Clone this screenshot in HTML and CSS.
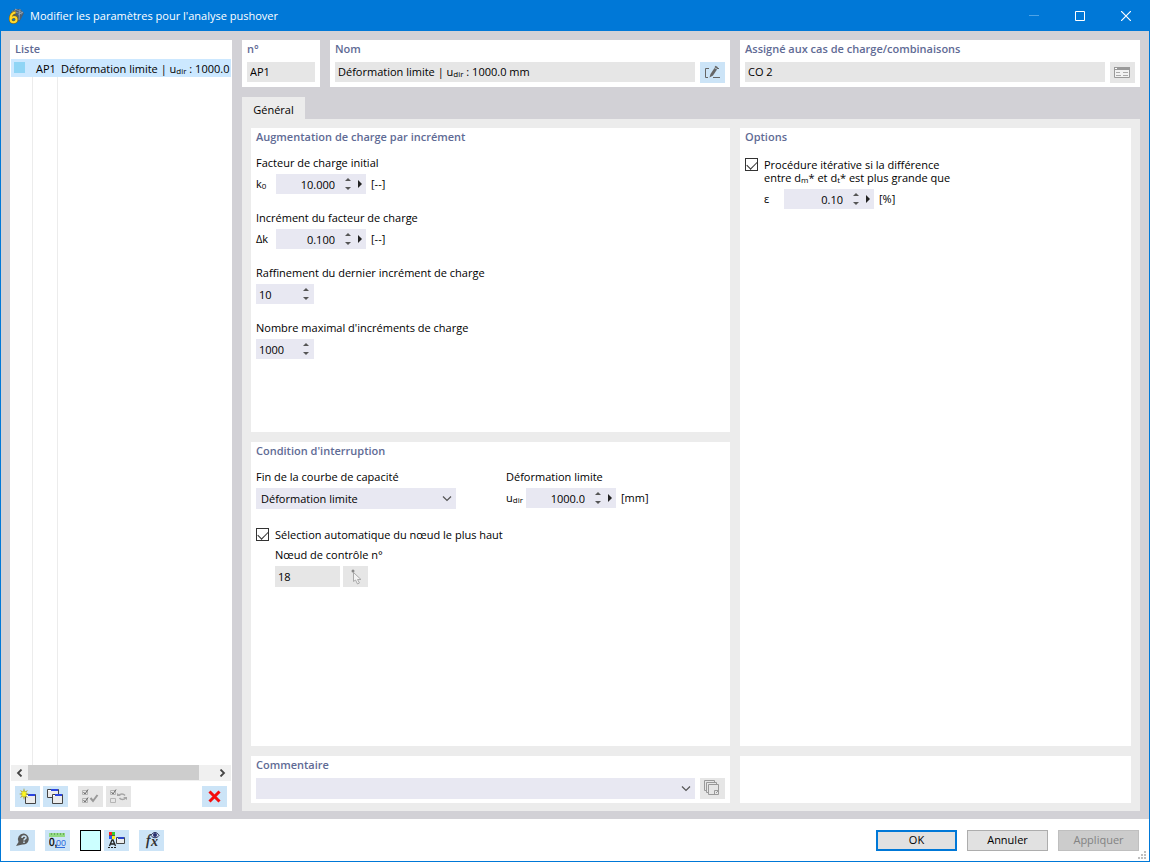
FILE: index.html
```html
<!DOCTYPE html>
<html lang="fr">
<head>
    <meta charset="UTF-8">
    <title>Modifier les paramètres pour l'analyse pushover</title>
    <link rel="stylesheet" href="styles.css">
</head>

<body>
    <div class="window">
        <!-- Barre de titre -->
        <header class="titlebar">
            <svg class="logo" width="16" height="16" viewBox="0 0 16 16">
                <path d="M3 4 7 1h5l4 4-3 6-2 3z" fill="#4a6076"/>
                <path d="M4 3l10 3M7 1l8 4M12 1l-1 11M8 1 5 5M15 4l-5 3" stroke="#9aabba" stroke-width=".7"/>
                <path d="M7.500 4.500C4 5 2.500 8 2.500 11c0 2 1 3.200 3 3.200s3-1.300 3-2.800-1-2.400-2.600-2.400S3.500 9.500 3 11" fill="none" stroke="#8a6500" stroke-width="3.200"/>
                <path d="M7.500 4.500C4 5 2.500 8 2.500 11c0 2 1 3.200 3 3.200s3-1.300 3-2.800-1-2.400-2.600-2.400S3.500 9.500 3 11" fill="none" stroke="#ffd92e" stroke-width="2"/>
            </svg>
            <h1 class="window-title">Modifier les paramètres pour l'analyse pushover</h1>
            <div class="window-buttons">
                <button type="button" aria-label="Réduire" disabled>
                    <svg width="10" height="10"><path d="M0 4.500h10" stroke="#4ea3e6"/></svg>
                </button>
                <button type="button" aria-label="Agrandir">
                    <svg width="10" height="10"><path d="M.5.5h9v9h-9z" fill="none" stroke="#fff"/></svg>
                </button>
                <button type="button" aria-label="Fermer">
                    <svg width="10" height="10"><path d="M0 0l10 10M10 0 0 10" stroke="#fff" stroke-width="1.200"/></svg>
                </button>
            </div>
        </header>

        <main class="content">
            <!-- Liste -->
            <aside class="panel list">
                <h2 class="panel-title">Liste</h2>
                <ul class="list-rows">
                    <li class="list-row">
                        <span class="swatch"></span>
                        <span class="list-no">AP1</span>
                        <span class="list-name">Déformation limite | u<sub>dir</sub> : 1000.0 mm</span>
                    </li>
                </ul>
                <div class="scrollbar">
                    <button type="button" aria-label="Défiler à gauche">
                        <svg width="7" height="8"><path d="M5.500.5 2 4l3.500 3.500" fill="none" stroke="#444" stroke-width="1.800"/></svg>
                    </button>
                    <div class="scroll-track"><div class="scroll-thumb"></div></div>
                    <button type="button" aria-label="Défiler à droite">
                        <svg width="7" height="8"><path d="M1.500.5 5 4 1.500 7.500" fill="none" stroke="#444" stroke-width="1.800"/></svg>
                    </button>
                </div>
                <div class="toolbar">
                    <button type="button" class="tool" aria-label="Nouveau">
                        <svg width="17" height="17">
                            <path d="M6.500 6.500h10v9h-10z" fill="#ececec" stroke="#444"/>
                            <path d="M7 7h9v1H7z" fill="#fff"/><path d="M9 6h7v2H9z" fill="#2b45e0"/>
                            <path d="M5 0l1 3.500L9 2 7 5l3 1-3 1 2 3-3-1.500L5 12l-1-3.500L1 10l2-3-3-1 3-1-2-3 3 1.500z" fill="#a5a03c"/>
                            <path d="M5 2l.7 2.300L8 3.500 6.500 5.500 8 6l-1.500.7L7.500 9 5.700 7.700 5 10l-.7-2.300L2.500 9l1-2.300L2 6l1.500-.5L2.500 3l1.800 1.300z" fill="#fff820"/>
                        </svg>
                    </button>
                    <button type="button" class="tool" aria-label="Copier">
                        <svg width="17" height="17">
                            <path d="M.5 1.500h11v8H.5z" fill="#ececec" stroke="#444"/><path d="M1 2h3v1H1z" fill="#fff"/><path d="M4 1h7v2H4z" fill="#2b45e0"/>
                            <path d="M5.500 6.500h10v9h-10z" fill="#ececec" stroke="#444"/><path d="M6 7h3v1H6z" fill="#fff"/><path d="M8 6h7v2H8z" fill="#2b45e0"/>
                        </svg>
                    </button>
                    <button type="button" class="tool tool-gap" aria-label="Tout sélectionner" disabled>
                        <svg width="17" height="15" fill="none">
                            <path d="M.5 1.500h5v4h-5zM.5 9.500h5v4h-5z" stroke="#b5b5b5"/>
                            <path d="M1.500 3 3 5l3-4.500M1.500 11 3 13l3-4.500" stroke="#666"/>
                            <path d="M8.500 9l2.500 3 4.500-6" stroke="#999" stroke-width="2"/>
                        </svg>
                    </button>
                    <button type="button" class="tool" aria-label="Inverser la sélection" disabled>
                        <svg width="17" height="15" fill="none">
                            <path d="M.5 1.500h5v4h-5zM.5 9.500h5v4h-5z" stroke="#b5b5b5"/>
                            <path d="M1.500 3 3 5l3-4.500" stroke="#666"/>
                            <path d="M8.500 6.500c2-2 5-2 6.500 0M15.500 9c-1.500 2-4.500 2-6 0" stroke="#a5a5a5" stroke-width="1.500"/>
                            <path d="M7 4v3h4zM17 11V8h-4z" fill="#a5a5a5"/>
                        </svg>
                    </button>
                    <button type="button" class="tool tool-end" aria-label="Supprimer">
                        <svg width="13" height="13"><path d="M1.500 1.500l10 10M11.500 1.500l-10 10" stroke="#f50d0d" stroke-width="3"/></svg>
                    </button>
                </div>
            </aside>

            <div class="details">
                <!-- En-tête -->
                <div class="summary">
                    <section class="panel">
                        <h2 class="panel-title"><label for="no">n°</label></h2>
                        <div class="bar"><input class="field readonly grow" id="no" value="AP1" readonly></div>
                    </section>
                    <section class="panel">
                        <h2 class="panel-title">Nom</h2>
                        <div class="bar">
                            <output class="field readonly grow">Déformation limite | u<sub>dir</sub> : 1000.0 mm</output>
                            <button type="button" class="tool" aria-label="Modifier le nom">
                                <svg width="17" height="15" fill="none" stroke="#666">
                                    <path d="M5 3.500H1.500v9H4M9 12.500h7M13 3.500h2"/>
                                    <path d="M5.500 12.500 6.500 9l4-6 2.500 1.500-4 6z" fill="#666" stroke="none"/>
                                    <path d="M11 1.500 13.500 3" stroke-width="2"/>
                                </svg>
                            </button>
                        </div>
                    </section>
                    <section class="panel">
                        <h2 class="panel-title"><label for="assigned">Assigné aux cas de charge/combinaisons</label></h2>
                        <div class="bar">
                            <input class="field readonly grow" id="assigned" value="CO 2" readonly>
                            <button type="button" class="tool" aria-label="Afficher les cas de charge" disabled>
                                <svg width="17" height="11" fill="none" stroke="#aaa">
                                    <path d="M.5.5h15v10H.5z" fill="#f2f2f2" stroke="#999"/>
                                    <path d="M0 1.500h16" stroke="#999" stroke-width="3"/>
                                    <path d="M1 1.500h2" stroke="#fff"/>
                                    <path d="M2 5.500h4M9 5.500h5M2 8.500h5M9 8.500h5"/>
                                </svg>
                            </button>
                        </div>
                    </section>
                </div>

                <nav class="tabs"><button type="button" class="tab">Général</button></nav>

                <div class="tab-body">
                    <div class="upper">
                        <div class="column">
                            <section class="panel">
                                <h2 class="panel-title">Augmentation de charge par incrément</h2>
                                <div class="group">
                                    <label for="k0">Facteur de charge initial</label>
                                    <div class="line">
                                        <span class="symbol">k<sub>0</sub></span>
                                        <div class="spin spin-wide">
                                            <input id="k0" value="10.000">
                                            <span class="arrows"><button type="button" class="up" aria-label="Augmenter"></button><button type="button" class="down" aria-label="Diminuer"></button></span>
                                            <button type="button" class="more" aria-label="Plus"></button>
                                        </div>
                                        <span class="unit">[--]</span>
                                    </div>
                                </div>
                                <div class="group">
                                    <label for="dk">Incrément du facteur de charge</label>
                                    <div class="line">
                                        <span class="symbol">Δk</span>
                                        <div class="spin spin-wide">
                                            <input id="dk" value="0.100">
                                            <span class="arrows"><button type="button" class="up" aria-label="Augmenter"></button><button type="button" class="down" aria-label="Diminuer"></button></span>
                                            <button type="button" class="more" aria-label="Plus"></button>
                                        </div>
                                        <span class="unit">[--]</span>
                                    </div>
                                </div>
                                <div class="group">
                                    <label for="refine">Raffinement du dernier incrément de charge</label>
                                    <div class="spin spin-small">
                                        <input id="refine" value="10">
                                        <span class="arrows"><button type="button" class="up" aria-label="Augmenter"></button><button type="button" class="down" aria-label="Diminuer"></button></span>
                                    </div>
                                </div>
                                <div class="group">
                                    <label for="maxinc">Nombre maximal d'incréments de charge</label>
                                    <div class="spin spin-small">
                                        <input id="maxinc" value="1000">
                                        <span class="arrows"><button type="button" class="up" aria-label="Augmenter"></button><button type="button" class="down" aria-label="Diminuer"></button></span>
                                    </div>
                                </div>
                            </section>

                            <section class="panel">
                                <h2 class="panel-title">Condition d'interruption</h2>
                                <div class="pair">
                                    <div class="group">
                                        <label for="end">Fin de la courbe de capacité</label>
                                        <div class="select">
                                            <select id="end"><option>Déformation limite</option></select>
                                            <svg class="chevron" width="10" height="6"><path d="M1 .5l4 4 4-4" fill="none" stroke="#555" stroke-width="1.200"/></svg>
                                        </div>
                                    </div>
                                    <div class="group">
                                        <label for="udir">Déformation limite</label>
                                        <div class="line">
                                            <span class="symbol">u<sub>dir</sub></span>
                                            <div class="spin spin-wide">
                                                <input id="udir" value="1000.0">
                                                <span class="arrows"><button type="button" class="up" aria-label="Augmenter"></button><button type="button" class="down" aria-label="Diminuer"></button></span>
                                                <button type="button" class="more" aria-label="Plus"></button>
                                            </div>
                                            <span class="unit">[mm]</span>
                                        </div>
                                    </div>
                                </div>
                                <div class="check check-node">
                                    <input type="checkbox" id="auto" checked>
                                    <label for="auto">Sélection automatique du nœud le plus haut</label>
                                </div>
                                <div class="indent node">
                                    <label for="node">Nœud de contrôle n°</label>
                                    <div class="bar bar-tight">
                                        <input class="field readonly node-no" id="node" value="18" readonly>
                                        <button type="button" class="tool" aria-label="Sélectionner un nœud" disabled>
                                            <svg width="12" height="16">
                                                <path d="M3.500 3.500v9l2-1.500 2 4 2-1-2-3.500H11z" fill="#f3f3f3" stroke="#aaa"/>
                                                <circle cx="3" cy="2" r="1.500" fill="#888"/>
                                            </svg>
                                        </button>
                                    </div>
                                </div>
                            </section>
                        </div>

                        <section class="panel">
                            <h2 class="panel-title">Options</h2>
                            <div class="check check-options">
                                <input type="checkbox" id="iter" checked>
                                <label for="iter">Procédure itérative si la différence<br>entre d<sub>m</sub>* et d<sub>t</sub>* est plus grande que</label>
                            </div>
                            <div class="line indent">
                                <label class="symbol" for="eps">ε</label>
                                <div class="spin spin-wide">
                                    <input id="eps" value="0.10">
                                    <span class="arrows"><button type="button" class="up" aria-label="Augmenter"></button><button type="button" class="down" aria-label="Diminuer"></button></span>
                                    <button type="button" class="more" aria-label="Plus"></button>
                                </div>
                                <span class="unit">[%]</span>
                            </div>
                        </section>
                    </div>

                    <div class="lower">
                        <section class="panel">
                            <h2 class="panel-title"><label for="comment">Commentaire</label></h2>
                            <div class="bar">
                                <div class="select grow">
                                    <select id="comment"><option></option></select>
                                    <svg class="chevron" width="10" height="6"><path d="M1 .5l4 4 4-4" fill="none" stroke="#555" stroke-width="1.200"/></svg>
                                </div>
                                <button type="button" class="tool" aria-label="Bibliothèque de commentaires" disabled>
                                    <svg width="17" height="17" fill="none" stroke="#999">
                                        <path d="M2 10.500H.5V.5h10V2M4 12.500H2.500v-10h10V4"/>
                                        <path d="M4.500 4.500h10v10h-10zM10.500 14v-3.500h4M12 13l2-2"/>
                                    </svg>
                                </button>
                            </div>
                        </section>
                        <section class="panel"></section>
                    </div>
                </div>
            </div>
        </main>

        <!-- Pied -->
        <footer class="footer">
            <button type="button" class="tool" aria-label="Aide">
                <svg width="16" height="16">
                    <path d="M9 1.500a5.500 5.500 0 1 1-1.500 11L1 14l2.500-4A5.800 5.800 0 0 1 9 1.500z" fill="#5a5a5a"/>
                    <path d="M7 6c0-2.500 4-2.500 4-.3C11 7 9 7 9 8.500M9 9.500V11" fill="none" stroke="#cce4f7" stroke-width="1.500"/>
                </svg>
            </button>
            <button type="button" class="tool" aria-label="Unités et décimales">
                <svg width="17" height="17">
                    <path d="M0 1h16v4H0z" fill="#92da82"/>
                    <path d="M2.500 1v2M5.500 1v2M8.500 1v2M11.500 1v2M14.500 1v2" stroke="#68ae5c"/>
                    <text x="0" y="14" font-size="10" font-family="Liberation Sans" fill="#000" stroke="#000" stroke-width=".3">0,</text>
                    <text x="7" y="14" font-size="9" font-family="Liberation Sans" fill="#2f6bdc">00</text>
                    <path d="M7 15.500h9" stroke="#2f6bdc"/>
                </svg>
            </button>
            <button type="button" class="color" aria-label="Couleur"></button>
            <button type="button" class="tool" aria-label="Affichage">
                <svg width="17" height="17">
                    <path d="M1 0h6v7H1z" fill="#555"/>
                    <path d="M1 0h3v3H1z" fill="#ff2020"/><path d="M4 0h3v3H4z" fill="#30d030"/>
                    <path d="M1 4h3v3H1z" fill="#2656f8"/><path d="M4 4h3v3H4z" fill="#fff01b"/>
                    <path d="M1.500 14 4 8h1l2.500 6M2.500 12h4" fill="none" stroke="#222" stroke-width="1.300"/>
                    <path d="M0 15.500h9" stroke="#222" stroke-dasharray="2 1"/>
                    <path d="M8.500 5.500h8v6h-8z" fill="#ececec" stroke="#444"/><path d="M10 5h6v2h-6z" fill="#2b45c8"/>
                </svg>
            </button>
            <button type="button" class="tool tool-gap" aria-label="Formules">
                <svg width="18" height="18">
                    <text x="3" y="14" font-size="15" font-style="italic" font-family="Liberation Serif" fill="#222" stroke="#222" stroke-width=".3">f</text>
                    <text x="8" y="15" font-size="14" font-style="italic" font-weight="bold" font-family="Liberation Serif" fill="#333">x</text>
                    <path d="M8 4.500c2-4 6-4 8 0-2 3-6 3-8 0z" fill="#dce6f5" stroke="#27305f"/>
                    <circle cx="12" cy="4" r="2" fill="#27306f"/>
                </svg>
            </button>
            <div class="actions">
                <button type="submit" class="action primary">OK</button>
                <button type="button" class="action">Annuler</button>
                <button type="button" class="action" disabled>Appliquer</button>
            </div>
            <svg class="grip" width="8" height="8" fill="#bfbfbf">
                <path d="M6 0h2v2H6zM3 3h2v2H3zM6 3h2v2H6zM0 6h2v2H0zM3 6h2v2H3zM6 6h2v2H6z"/>
            </svg>
        </footer>
    </div>
</body>
</html>
```
FILE: styles.css
```css
* {
    box-sizing: border-box;
}

body,
h1,
h2,
ul {
    margin: 0;
    padding: 0;
}

body,
button,
input,
select {
    font-family: "Open Sans", "Noto Sans", sans-serif;
    font-size: 11px;
    line-height: 16px;
    color: #000;
}

button {
    display: flex;
    align-items: center;
    justify-content: center;
    padding: 0;
    border: 0;
    background: none;
}

sub {
    font-size: 8px;
    line-height: 0;
    vertical-align: -1px;
}

svg {
    flex: none;
}

.window {
    display: flex;
    flex-direction: column;
    min-height: 100vh;
    border: 1px solid #0078d7;
    background: #fff;
}

/* Barre de titre */
.titlebar {
    display: flex;
    align-items: center;
    height: 30px;
    padding-left: 7px;
    background: #0078d7;
}

.window-title {
    margin-left: 6px;
    font-size: 11px;
    font-weight: 400;
    color: #fff;
}

.window-buttons {
    display: flex;
    margin-left: auto;
}

.window-buttons button {
    width: 46px;
    height: 30px;
}

.content {
    display: flex;
    flex: 1;
    gap: 10px;
    padding: 9px 9px 8px;
    background: #d2d1d6;
}

.panel {
    min-width: 0;
    padding: 0 5px 4px;
    background: #fff;
}

.panel-title {
    height: 18px;
    font-size: 11px;
    font-weight: 600;
    line-height: 18px;
    color: #5f6b95;
    white-space: nowrap;
}

/* Liste */
.list {
    display: flex;
    flex-direction: column;
    flex: none;
    width: 222px;
    padding: 0 1px 4px;
}

.list .panel-title {
    padding-left: 4px;
    height: 19px;
}

.list-rows {
    flex: 1;
    list-style: none;
    /* séparateurs de colonnes */
    background:
        linear-gradient(#ececec, #ececec) 21px 0 / 1px 100% no-repeat,
        linear-gradient(#ececec, #ececec) 46px 0 / 1px 100% no-repeat;
}

.list-row {
    display: grid;
    grid-template-columns: 22px 25px 1fr;
    height: 18px;
    line-height: 20px;
    background: #cce8ff;
    white-space: nowrap;
    overflow: hidden;
}

.swatch {
    width: 11px;
    height: 11px;
    margin: 3px;
    background: #90d5f5;
}

.list-no,
.list-name {
    padding-left: 3px;
}

.list-name {
    overflow: hidden;
}

.scrollbar {
    display: flex;
    height: 16px;
    background: #f0f0f0;
}

.scrollbar button {
    width: 17px;
}

.scroll-track {
    flex: 1;
}

.scroll-thumb {
    width: 92%;
    height: 15px;
    background: #cdcdcd;
}

.toolbar {
    display: flex;
    gap: 3px;
    padding: 5px 4px 0;
}

.tool {
    flex: none;
    width: 25px;
    height: 21px;
    background: #cce4f7;
}

.tool:disabled {
    background: #e6e6e6;
}

.tool-gap {
    margin-left: 7px;
}

.tool-end {
    margin-left: auto;
}

/* En-tête */
.details {
    display: flex;
    flex-direction: column;
    flex: 1;
    min-width: 0;
}

.summary {
    display: grid;
    grid-template-columns: 78px 1fr 1fr;
    gap: 10px;
}

.bar {
    display: flex;
    gap: 5px;
    padding-top: 4px;
    height: 25px;
}

.bar-tight {
    gap: 3px;
    padding-top: 0;
    height: 21px;
}

.grow {
    flex: 1;
    min-width: 0;
}

.field {
    height: 20px;
    padding: 0 3px;
    border: 0;
    line-height: 20px;
}

.readonly {
    background: #e6e6e6;
}

/* Onglets */
.tabs {
    display: flex;
    margin-top: 10px;
}

.tab {
    width: 63px;
    height: 22px;
    padding-top: 4px;
    background: #ececec;
}

.tab-body {
    display: flex;
    flex-direction: column;
    flex: 1;
    gap: 10px;
    padding: 9px 9px 8px;
    background: #ececec;
}

.upper,
.lower {
    display: grid;
    grid-template-columns: 479fr 391fr;
    gap: 10px;
}

.upper {
    flex: 1;
}

.column {
    display: grid;
    grid-template-rows: 1fr 1fr;
    gap: 10px;
    min-width: 0;
}

/* Champs */
.group {
    display: flex;
    flex-direction: column;
    align-items: flex-start;
    gap: 3px;
    margin-bottom: 16px;
}

.panel-title + .group,
.panel-title + .pair {
    margin-top: 9px;
}

.line {
    display: flex;
    align-items: center;
}

.symbol {
    width: 20px;
    white-space: nowrap;
}

.unit {
    margin-left: 5px;
}

.spin {
    display: flex;
    align-items: center;
    height: 20px;
    background: #e8e8f2;
}

.spin input {
    flex: 1;
    min-width: 0;
    height: 20px;
    padding: 0 3px;
    border: 0;
    background: none;
}

.spin-wide {
    width: 90px;
}

.spin-wide input {
    padding-right: 6px;
    text-align: right;
}

.spin-small {
    width: 58px;
}

.arrows {
    display: flex;
    flex-direction: column;
    align-items: center;
    gap: 6px;
    width: 13px;
}

.spin-small .arrows {
    width: 17px;
}

.up,
.down {
    border: 3px solid transparent;
}

.up {
    border-top: 0;
    border-bottom-color: #555;
}

.down {
    border-bottom: 0;
    border-top-color: #555;
}

.more {
    margin: 0 4px 0 4px;
    border: 4px solid transparent;
    border-right: 0;
    border-left-color: #222;
}

.pair {
    display: grid;
    grid-template-columns: 200px 1fr;
    gap: 50px;
}

.select {
    position: relative;
    height: 21px;
}

.select select {
    width: 100%;
    height: 21px;
    padding: 0 24px 0 5px;
    border: 0;
    border-radius: 0;
    background: #e8e8f2;
    appearance: none;
}

.pair .select {
    width: 200px;
}

.chevron {
    position: absolute;
    top: 8px;
    right: 4px;
    pointer-events: none;
}

/* Cases à cocher */
.check {
    display: flex;
    gap: 6px;
}

.check input {
    flex: none;
    width: 13px;
    height: 13px;
    margin: 0;
    border: 1px solid #333;
    background: #fff;
    appearance: none;
}

.check input:checked::before {
    content: "";
    display: block;
    width: 9px;
    height: 5px;
    margin: 2px 1px;
    border: solid #333;
    border-width: 0 0 1px 1px;
    transform: rotate(-45deg);
}

.check label {
    line-height: 13px;
}

.check-node {
    margin-top: 3px;
}

.check-options {
    margin: 12px 0 5px;
}

.indent {
    margin-left: 19px;
}

.node {
    display: flex;
    flex-direction: column;
    gap: 3px;
    margin-top: 6px;
}

.node-no {
    width: 65px;
}

.node .field {
    height: 21px;
}

/* Pied */
.footer {
    position: relative;
    display: flex;
    align-items: center;
    gap: 10px;
    height: 42px;
    padding: 0 10px 0 9px;
}

.color {
    width: 21px;
    height: 21px;
    border: 1px solid #000;
    background: #ccffff;
}

.color + .tool {
    margin-left: -7px;
}

.footer .tool-gap {
    margin-left: 0;
}

.actions {
    display: flex;
    gap: 10px;
    margin-left: auto;
}

.action {
    width: 81px;
    height: 21px;
    border: 1px solid #adadad;
    background: #e1e1e1;
}

.action:disabled {
    border-color: #bfbfbf;
    background: #ccc;
    color: #838383;
}

.primary {
    border: 2px solid #0078d7;
}

.grip {
    position: absolute;
    right: 3px;
    bottom: 2px;
}
```
